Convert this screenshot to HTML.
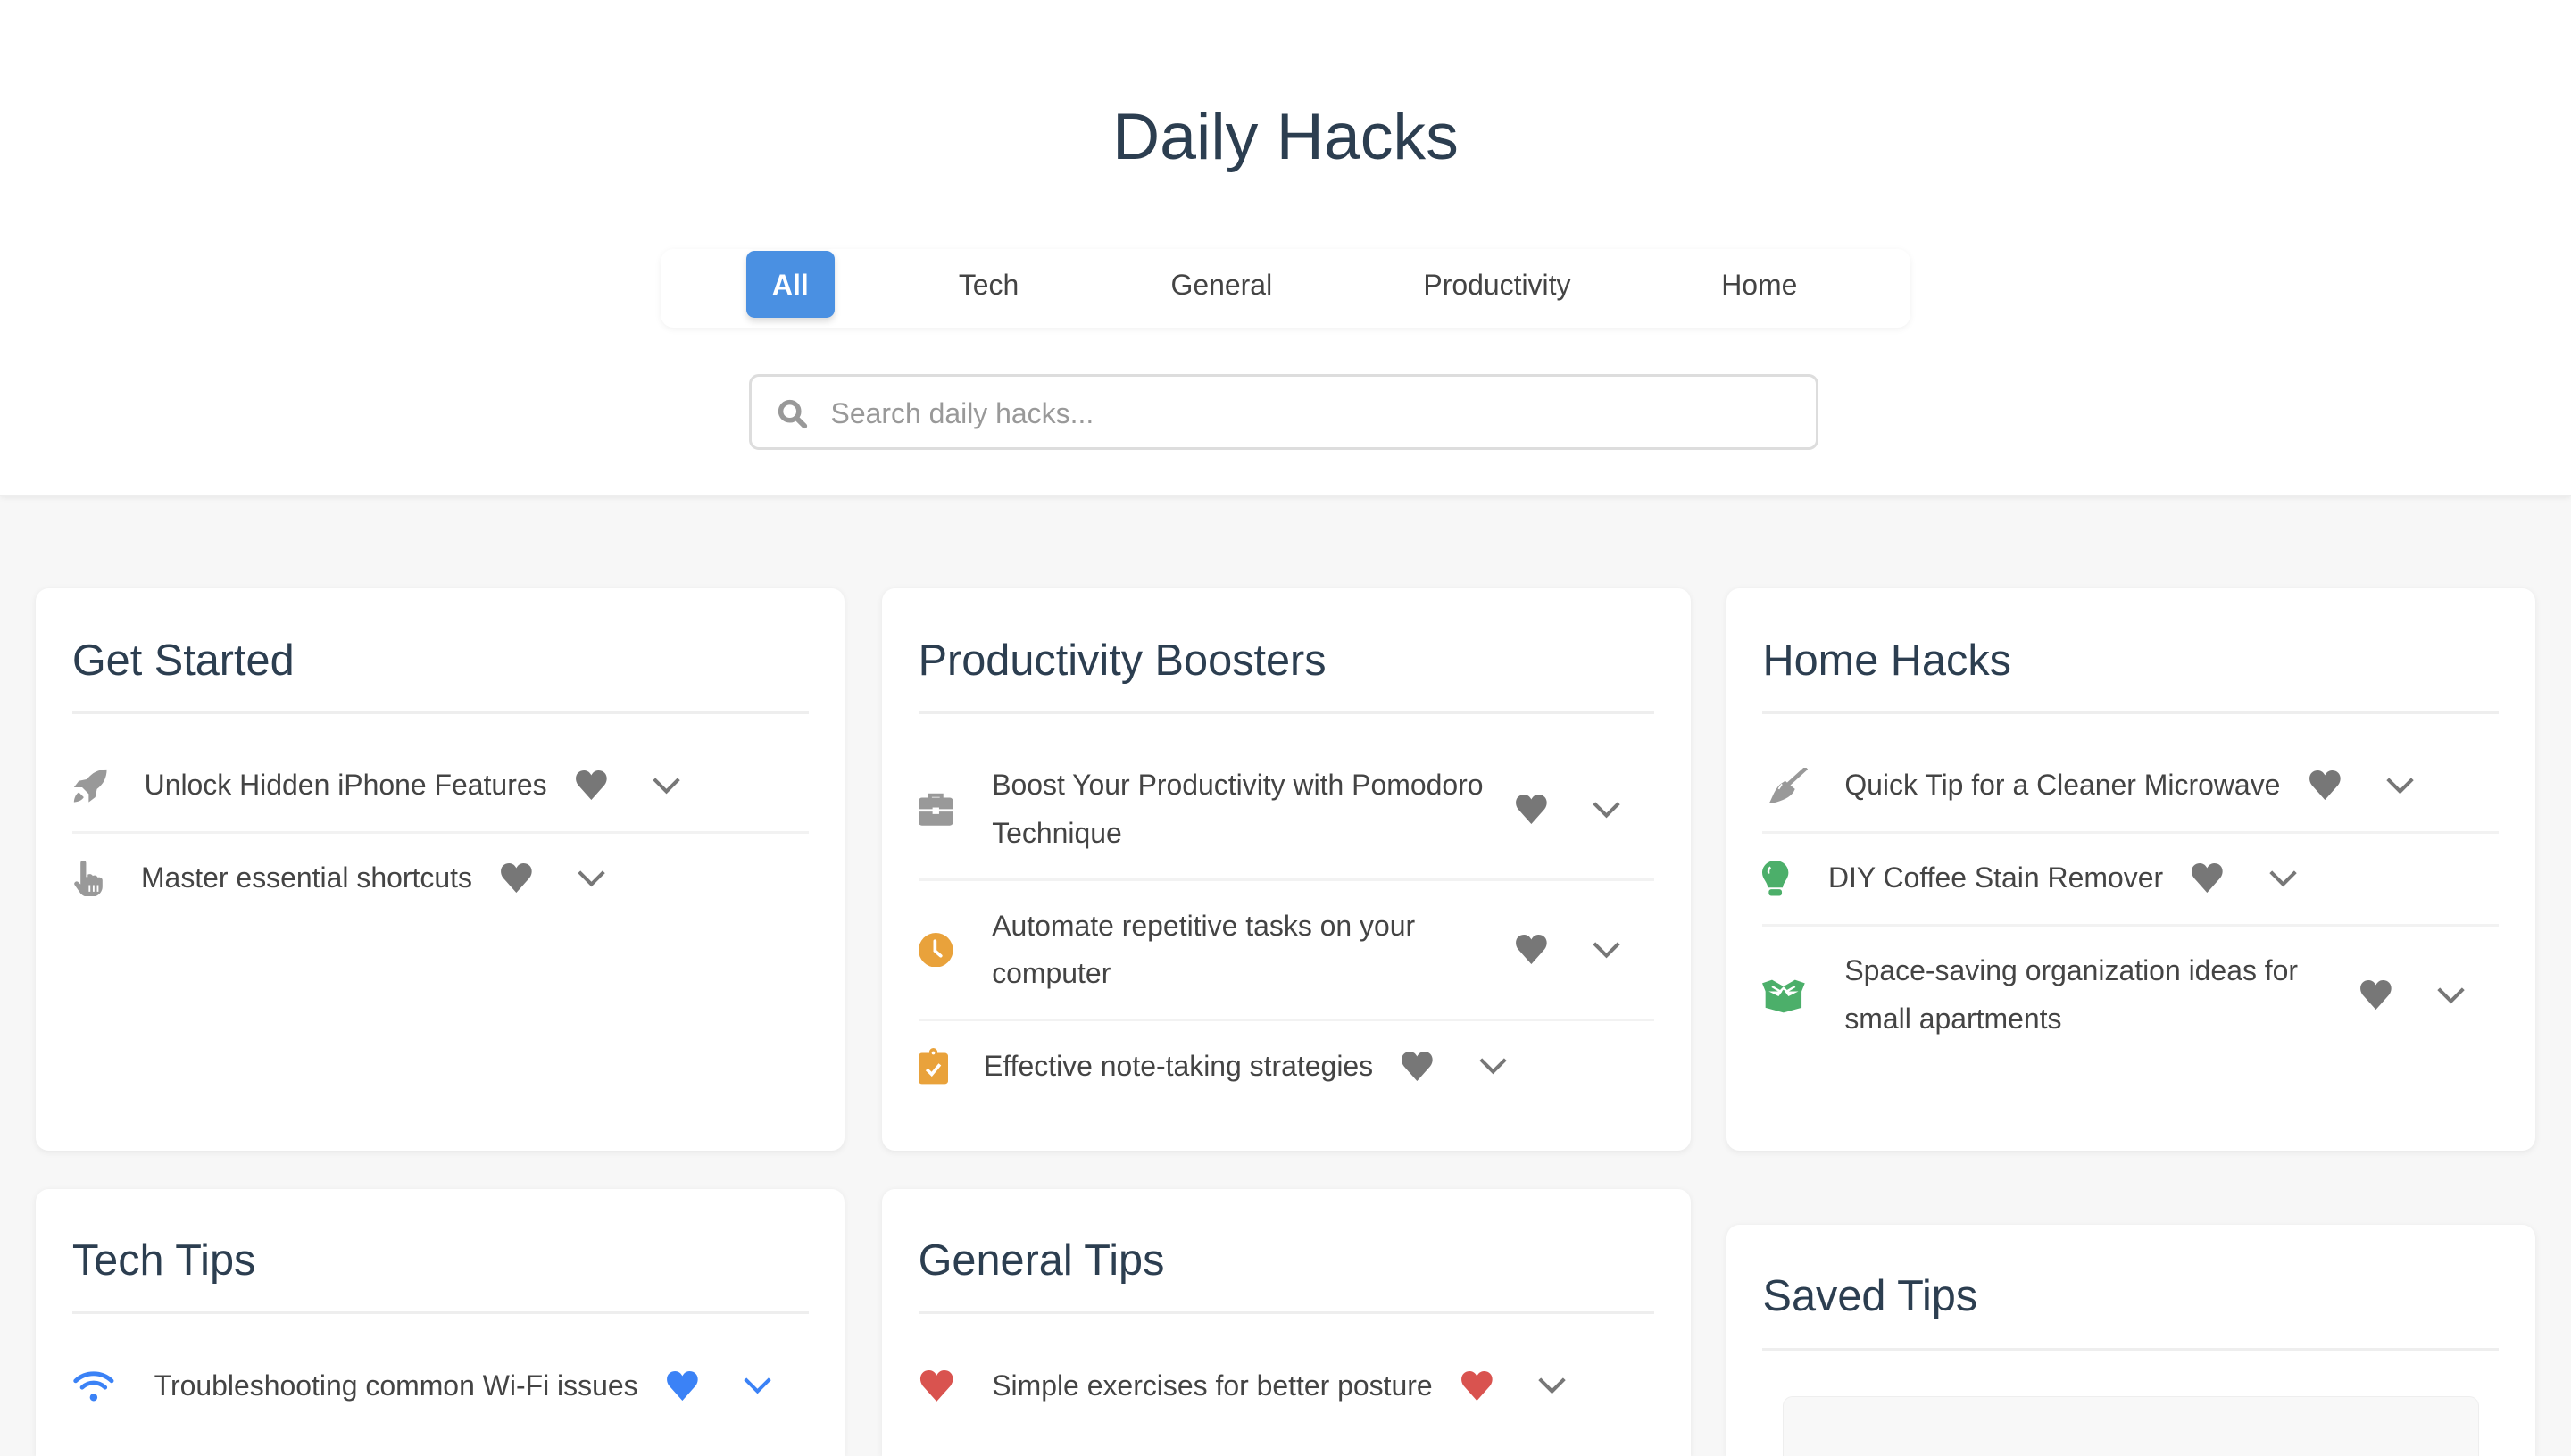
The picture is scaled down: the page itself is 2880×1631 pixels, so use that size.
<!DOCTYPE html>
<html style="height:1631px;overflow:hidden"><head><meta charset="utf-8">
<style>
html,body{margin:0;padding:0}
body{width:1568px;height:888px;overflow:hidden;background:#f7f7f7;font-family:"Liberation Sans",Arial,sans-serif;zoom:1.83674;position:relative}
.hdr{position:absolute;left:0;top:0;width:1568px;height:302px;background:#fff;box-shadow:0 1px 3px rgba(0,0,0,.06);border-bottom:1px solid #eee}
h1{position:absolute;top:58px;left:0;width:1568px;text-align:center;margin:0;font-size:40px;font-weight:400;color:#2c3e50;line-height:50px}
.tabs{position:absolute;left:403px;top:152px;width:762px;height:48px;background:#fff;border-radius:8px;box-shadow:0 1px 4px rgba(0,0,0,.06)}
.tab{position:absolute;top:1px;height:42px;line-height:42px;font-size:17.4px;color:#444;transform:translateX(-50%)}
.all{left:52px;top:1px;width:54px;height:41px;background:#4a90e2;color:#fff;font-weight:700;text-align:center;border-radius:5px;transform:none;box-shadow:0 2px 4px rgba(0,0,0,.15)}
.search{position:absolute;left:457px;top:228px;width:649px;height:43px;border:2px solid #ddd;border-radius:6px;background:#fff}
.search span{position:absolute;left:48px;top:1px;line-height:43px;font-size:17.4px;color:#999}
.card{position:absolute;background:#fff;border-radius:8px;box-shadow:0 1px 4px rgba(0,0,0,.07);padding:22px;box-sizing:border-box;width:493px}
.card h2{margin:0;font-size:26.5px;font-weight:400;color:#2c3e50;line-height:44px;padding-bottom:9px;border-bottom:2px solid #eee}
.list{margin-top:16px}
.it{display:flex;align-items:center;padding:13px 20px 13px 0;border-bottom:2px solid #f2f2f2;font-size:17.4px;line-height:29px;color:#444}
.it:last-child{border-bottom:none}
.ic{flex:none;display:flex;align-items:center;margin-right:22px}
.tx{flex:0 1 auto}
.hr{flex:none;margin-left:17px;width:20px;height:18px}
.ch{flex:none;margin-left:27px;width:18px;height:11px}
</style></head><body>
<div class="hdr">
<h1>Daily Hacks</h1>
<div class="tabs">
<div class="tab all">All</div>
<div class="tab" style="left:200px">Tech</div>
<div class="tab" style="left:342px">General</div>
<div class="tab" style="left:510px">Productivity</div>
<div class="tab" style="left:670px">Home</div>
</div>
<div class="search"><svg style="position:absolute;left:15px;top:13px" width="19" height="19" viewBox="0 0 19 19"><circle cx="8" cy="8" r="5.5" fill="none" stroke="#999" stroke-width="3"/><path d="M12 12l5 5" stroke="#999" stroke-width="3.2" stroke-linecap="round"/></svg><span>Search daily hacks...</span></div>
</div>

<svg width="0" height="0" style="position:absolute"><defs>
<symbol id="hh" viewBox="0 0 20 18"><path d="M10 18 L2 9 C-1 5 1 0 5.5 0 C8 0 9.3 1.6 10 3 C10.7 1.6 12 0 14.5 0 C19 0 21 5 18 9 Z"/></symbol>
<symbol id="cc" viewBox="0 0 18 11"><path d="M1.5 1.5 L9 9 L16.5 1.5" fill="none" stroke-width="2.2"/></symbol>
</defs></svg>

<div class="card" style="left:22px;top:359px;height:343px">
<h2>Get Started</h2>
<div class="list">
<div class="it"><div class="ic" style="width:22px"><svg width="22" height="22" viewBox="0 0 22 22"><path d="M21 1c-5 0-9 2-12 6L4 8 1 12l5 0 4 4 0 5 4-3 1-5c4-3 6-7 6-12z" fill="#999"/><path d="M4 15c-2 1-3 4-3 6 2 0 5-1 6-3z" fill="#999"/></svg></div><span class="tx">Unlock Hidden iPhone Features</span><svg class="hr" fill="#777"><use href="#hh"/></svg><svg class="ch" stroke="#777"><use href="#cc"/></svg></div>
<div class="it"><div class="ic" style="width:20px"><svg width="20" height="22" viewBox="0 0 20 22"><path d="M5 1.5a1.7 1.7 0 013.4 0V10h1V8.5c1.6-.6 2.7 0 3 .8 1.4-.6 2.8 0 3 1 1.5-.4 3 .3 3 1.7V16c0 3-2.5 6-6 6H9c-2 0-3-1-4-2L1.5 15c-1-1.2.6-3 2-2L5 14.5z" fill="#999"/><path d="M10.5 15v4M13 15v4M15.5 15v4" stroke="#fff" stroke-width="1"/></svg></div><span class="tx">Master essential shortcuts</span><svg class="hr" fill="#777"><use href="#hh"/></svg><svg class="ch" stroke="#777"><use href="#cc"/></svg></div>
</div></div>

<div class="card" style="left:538px;top:359px;height:343px">
<h2>Productivity Boosters</h2>
<div class="list">
<div class="it"><div class="ic" style="width:23px"><svg width="21" height="20" viewBox="0 0 21 20"><path d="M7 3V1.5h7V3" fill="none" stroke="#999" stroke-width="2.2"/><rect x="0" y="3" width="21" height="17" rx="2" fill="#999"/><rect x="0" y="10" width="21" height="1.5" fill="#fff"/><rect x="8.5" y="9" width="4" height="4" fill="#fff"/></svg></div><span class="tx">Boost Your Productivity with Pomodoro Technique</span><svg class="hr" fill="#777"><use href="#hh"/></svg><svg class="ch" stroke="#777"><use href="#cc"/></svg></div>
<div class="it"><div class="ic" style="width:23px"><svg width="21" height="21" viewBox="0 0 21 21"><circle cx="10.5" cy="10.5" r="10.5" fill="#e9a23b"/><path d="M10 5v6l3.5 3" fill="none" stroke="#fff" stroke-width="2" stroke-linecap="round"/></svg></div><span class="tx">Automate repetitive tasks on your computer</span><svg class="hr" fill="#777"><use href="#hh"/></svg><svg class="ch" stroke="#777"><use href="#cc"/></svg></div>
<div class="it"><div class="ic" style="width:18px"><svg width="18" height="22" viewBox="0 0 18 22"><rect x="0" y="3" width="18" height="19" rx="2" fill="#e9a23b"/><circle cx="9" cy="2.5" r="2.5" fill="#e9a23b"/><circle cx="9" cy="3" r="1" fill="#fff"/><path d="M5 13l3 3 5-6" fill="none" stroke="#fff" stroke-width="2"/></svg></div><span class="tx">Effective note-taking strategies</span><svg class="hr" fill="#777"><use href="#hh"/></svg><svg class="ch" stroke="#777"><use href="#cc"/></svg></div>
</div></div>

<div class="card" style="left:1053px;top:359px;height:343px">
<h2>Home Hacks</h2>
<div class="list">
<div class="it"><div class="ic" style="width:28px"><svg width="28" height="22" viewBox="0 0 28 22"><path d="M27 0 L16 10" stroke="#999" stroke-width="2.5"/><path d="M14 8l6 5-1 2c-3 4-9 6-15 7 2-3 3-8 7-12z" fill="#999"/><path d="M12 10l-2 3" stroke="#fff" stroke-width="1"/></svg></div><span class="tx">Quick Tip for a Cleaner Microwave</span><svg class="hr" fill="#777"><use href="#hh"/></svg><svg class="ch" stroke="#777"><use href="#cc"/></svg></div>
<div class="it"><div class="ic" style="width:18px"><svg width="16" height="22" viewBox="0 0 16 22"><path d="M8 0C3.5 0 0 3.2 0 7.5c0 3.5 3 5.5 3.5 9h9c.5-3.5 3.5-5.5 3.5-9C16 3.2 12.5 0 8 0z" fill="#4caf6a"/><rect x="4" y="17.5" width="8" height="4" rx="1.5" fill="#4caf6a"/><path d="M5 4a4 4 0 00-1 4" stroke="#fff" stroke-width="1.3" fill="none"/></svg></div><span class="tx">DIY Coffee Stain Remover</span><svg class="hr" fill="#777"><use href="#hh"/></svg><svg class="ch" stroke="#777"><use href="#cc"/></svg></div>
<div class="it"><div class="ic" style="width:28px"><svg width="26" height="22" viewBox="0 0 26 22"><path d="M0 4l6-2 7 4 7-4 6 2-2 5H2z" fill="#4caf6a"/><path d="M2 8l8 4 3-4 3 4 8-4v11l-11 3-11-3z" fill="#4caf6a"/><path d="M6 6l5 3 2-2 2 2 5-3" stroke="#fff" stroke-width="1.3" fill="none"/></svg></div><span class="tx">Space-saving organization ideas for small apartments</span><svg class="hr" fill="#777"><use href="#hh"/></svg><svg class="ch" stroke="#777"><use href="#cc"/></svg></div>
</div></div>

<div class="card" style="left:22px;top:725px;height:163px;border-radius:8px 8px 0 0">
<h2>Tech Tips</h2>
<div class="list">
<div class="it"><div class="ic" style="width:28px"><svg width="26" height="20" viewBox="0 0 26 20"><path d="M2 7a16 16 0 0122 0" fill="none" stroke="#3b82f6" stroke-width="2.6" stroke-linecap="round"/><path d="M6 11a10 10 0 0114 0" fill="none" stroke="#3b82f6" stroke-width="2.6" stroke-linecap="round"/><circle cx="13" cy="17" r="2.3" fill="#3b82f6"/></svg></div><span class="tx">Troubleshooting common Wi-Fi issues</span><svg class="hr" fill="#3b82f6"><use href="#hh"/></svg><svg class="ch" stroke="#3b82f6"><use href="#cc"/></svg></div>
</div></div>

<div class="card" style="left:538px;top:725px;height:163px;border-radius:8px 8px 0 0">
<h2>General Tips</h2>
<div class="list">
<div class="it"><div class="ic" style="width:23px"><svg width="22" height="19" viewBox="0 0 20 18" fill="#d9534f"><use href="#hh"/></svg></div><span class="tx">Simple exercises for better posture</span><svg class="hr" fill="#d9534f"><use href="#hh"/></svg><svg class="ch" stroke="#777"><use href="#cc"/></svg></div>
</div></div>

<div class="card" style="left:1053px;top:747px;height:141px;border-radius:8px 8px 0 0;overflow:hidden">
<h2>Saved Tips</h2>
<div style="margin:28px 12px 0;height:60px;background:#f8f8f8;border:1px solid #eee;border-radius:6px"></div>
</div>
</body></html>
